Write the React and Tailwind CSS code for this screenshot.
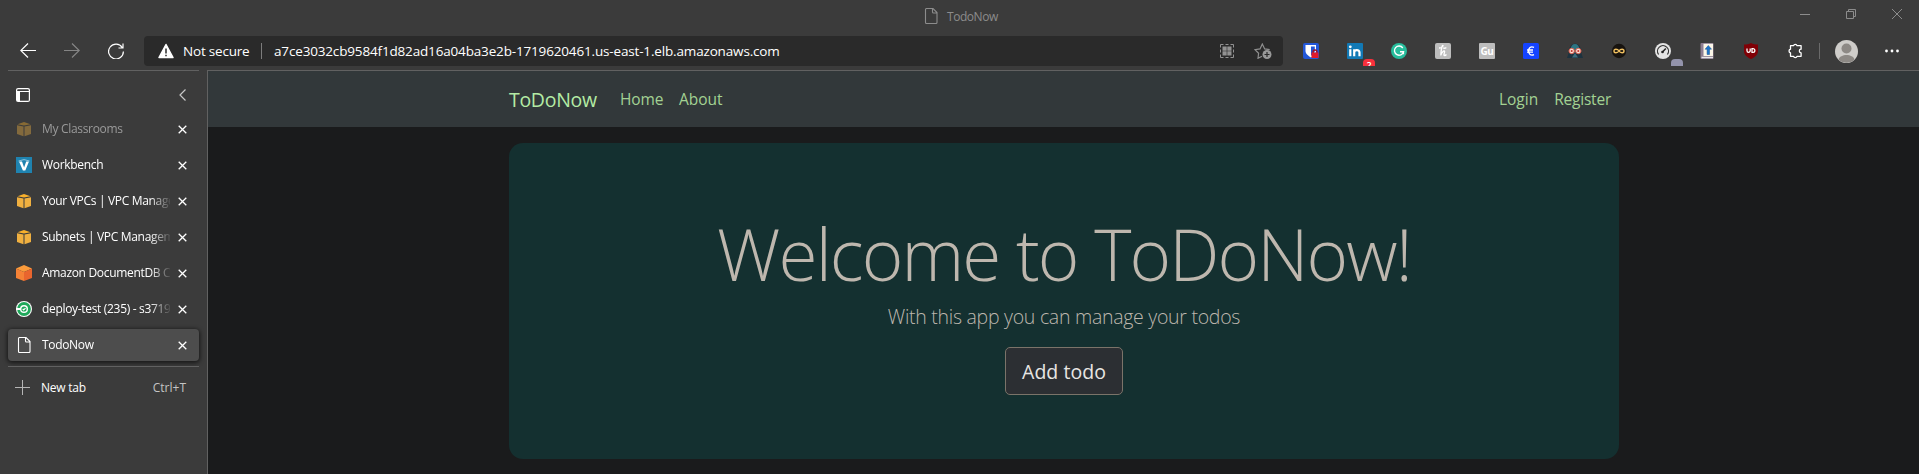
import React from "react";

const Svg = ({ w = 16, h = 16, className = "", children }) => (
  <svg width={w} height={h} viewBox={`0 0 ${w} ${h}`} fill="none" className={`block shrink-0 ${className}`}>
    {children}
  </svg>
);

const PageIcon = () => (
  <Svg>
    <path d="M3.500.500h6.500l4 4v10a1 1 0 0 1-1 1h-9.500a1 1 0 0 1-1-1v-13a1 1 0 0 1 1-1z M9.500.500v3.500a1 1 0 0 0 1 1h3.500" stroke="currentColor" strokeWidth="1.100" />
  </Svg>
);

const CubeIcon = () => (
  <Svg>
    <path d="M1.500 3.200 8 1l6.500 2.200L8 4.600z" fill="#f8b02c" />
    <path d="M1 4.200l6.500 1.200v9.900L1 12.900z M15 4.200 8.500 5.400v9.900l6.500-2.400z" fill="#f0b040" />
  </Svg>
);

const OrangeCube = () => (
  <Svg>
    <path d="M8 0l8 3.500L8 7 0 3.500z" fill="#fb9b3b" />
    <path d="M0 3.500 8 7v9l-8-3z" fill="#f58236" />
    <path d="M16 3.500 8 7v9l8-3z" fill="#e9652e" />
  </Svg>
);

const WorkbenchIcon = () => (
  <Svg>
    <path d="M0 0h16v16H0z" fill="#1f83b0" />
    <path d="M3 4.500h3l2.100 6 2.100-6h2.800L9.300 13.500H6.900z" fill="#fff" />
    <path d="M2.500 4Q8 1.200 13.500 4" stroke="#8cc4dc" />
  </Svg>
);

const CircleCi = () => (
  <Svg>
    <circle cx="8" cy="8" r="8" fill="#fff" />
    <circle cx="8" cy="8" r="6.900" fill="#1fa85a" />
    <circle cx="8" cy="8" r="4" fill="#fff" />
    <path d="M0 7h5v2H0z" fill="#fff" />
    <circle cx="8" cy="8" r="2.600" fill="#1fa85a" />
    <path d="M6.700 8l1 1L9.500 7.200" stroke="#fff" strokeWidth="1.200" />
  </Svg>
);

const tabs = [
  { label: "My Classrooms", icon: <CubeIcon />, dim: true },
  { label: "Workbench", icon: <WorkbenchIcon /> },
  { label: "Your VPCs | VPC Manage", icon: <CubeIcon /> },
  { label: "Subnets | VPC Managem", icon: <CubeIcon /> },
  { label: "Amazon DocumentDB C", icon: <OrangeCube /> },
  { label: "deploy-test (235) - s3719", icon: <CircleCi /> },
  { label: "TodoNow", icon: <PageIcon />, active: true },
];

function Tab({ label, icon, dim, active }) {
  return (
    <div className={`flex h-8 shrink-0 items-center rounded pl-2 pr-3 text-white ${active ? "bg-[#4d4d4d] shadow-[0_1px_4px_1px_rgba(0,0,0,0.6)]" : ""}`}>
      <span className={dim ? "opacity-40" : ""}>{icon}</span>
      <span className={`ml-2.5 w-[128px] overflow-hidden whitespace-nowrap text-[12px] leading-5 tracking-[-0.32px] [mask-image:linear-gradient(to_right,#000_108px,transparent_130px)] ${dim ? "text-[#9a9a9a]" : "text-white"}`}>
        {label}
      </span>
      <Svg w={9} h={9} className="ml-2">
        <path d="M.7.7l7.600 7.600M8.300.7.7 8.300" stroke="#fff" strokeWidth="1.300" />
      </Svg>
    </div>
  );
}

const extensions = [
  <Svg>
    <rect width="16" height="16" rx="2" fill="#2257d8" />
    <path d="M2.500 2h10.500v6c0 3-2.500 5-5 6.500C5.500 13 2.500 11 2.500 8z" fill="#fff" />
    <path d="M8 3.500h3.800V8c0 2-1.800 3.600-3.800 4.800z" fill="#2257d8" />
    <path d="M10 10V9a2 2 0 0 1 4 0v1" stroke="#a01020" strokeWidth="1.300" />
    <rect x="8.500" y="9.500" width="7" height="5.500" fill="#e01b2c" />
  </Svg>,
  <div className="relative">
    <Svg>
      <rect width="16" height="16" rx="1" fill="#1279b5" />
      <rect x="2.200" y="6.200" width="2.200" height="7" fill="#fff" />
      <circle cx="3.300" cy="3.800" r="1.400" fill="#fff" />
      <path d="M7.200 13.200v-7M7.200 9.500c0-3 5.300-3.200 5.300 0v3.700" stroke="#fff" strokeWidth="2.200" />
    </Svg>
    <div className="absolute left-4 top-4 h-[7px] w-3 overflow-hidden rounded-t-sm bg-[#f9303c] text-center text-[9px] font-semibold leading-[11px] text-white">2</div>
  </div>,
  <Svg>
    <circle cx="8" cy="8" r="8" fill="#27bd9c" />
    <path d="M11.800 5A4.600 4.600 0 1 0 12.500 8.800H9M12.400 8.800v2.500" stroke="#fff" strokeWidth="1.400" />
  </Svg>,
  <Svg>
    <rect width="16" height="16" rx="2" fill="#bdbdbd" />
    <path d="M4 5c2 0 4-1.200 4-2.500C7 2 6 7 5.800 12.500 6.300 9.500 9.500 6.500 9.600 8.500 9.600 10 8.200 12.500 9.500 12.500c1 0 1.500-.5 2-1M8 5c1.500.5 2.500.3 3.300-.5" stroke="#fff" strokeWidth="1.300" />
  </Svg>,
  <div className="flex h-4 w-4 items-center justify-center rounded-[1px] bg-[#bdbdbd] text-[10px] font-bold leading-none tracking-[-0.3px] text-white">Gu</div>,
  <Svg>
    <rect width="16" height="16" rx="1.500" fill="#1443ff" />
    <path d="M11 4.400C7.500 3 5.600 5 5.600 8s2 5 5.400 3.600M4 7h6M4 9.100h6" stroke="#fff" strokeWidth="1.300" />
  </Svg>,
  <Svg>
    <path d="M2 9C2 4 4 .8 8 .8S14 4 14 9l2 6H0z" fill="#1d3340" />
    <path d="M3.500 6.500C3.800 3 5.500 1 8 1s4.200 2 4.500 5.500z" fill="#2d7583" />
    <path d="M5 14.500 8 10l3 4.500z" fill="#3d6d7c" />
    <circle cx="4.700" cy="8" r="2.700" fill="#fbe3da" stroke="#d8604f" strokeWidth="1" />
    <circle cx="11.300" cy="8" r="2.700" fill="#fbe3da" stroke="#d8604f" strokeWidth="1" />
    <circle cx="4.700" cy="8" r="1.100" fill="#c8372f" />
    <circle cx="11.300" cy="8" r="1.100" fill="#c8372f" />
  </Svg>,
  <Svg>
    <circle cx="8" cy="8" r="7.200" fill="#17130f" />
    <path d="M8 8C6.500 5.600 3 5.600 3 8s3.500 2.400 5 0 5-2.400 5 0-3.500 2.400-5 0z" stroke="#f0c060" strokeWidth="1.400" />
  </Svg>,
  <div className="relative">
    <Svg>
      <circle cx="8" cy="8" r="8" fill="#e4e4e4" />
      <path d="M3.600 11.500A5.500 5.500 0 1 1 12.400 11.500" stroke="#333" strokeWidth="1.200" />
      <path d="M7.500 9 10.800 5.500" stroke="#222" strokeWidth="1.500" />
      <circle cx="7.500" cy="9" r="1.300" fill="#222" />
    </Svg>
    <div className="absolute left-4 top-4 h-[7px] w-3 rounded-t-sm bg-[#9393ab]" />
  </div>,
  <Svg>
    <rect x="1.500" y="0" width="13" height="16" rx="1" fill="#8d7e92" />
    <rect x="4.500" y=".8" width="9.500" height="12.200" fill="#fbf6e8" />
    <rect x="2.500" y="13.800" width="11.500" height="1.400" fill="#e8e8e8" />
    <path d="M9.300 2.500l3.200 3.700h-2v5.300H8.100V6.200h-2z" fill="#1c74cc" stroke="#174f88" strokeWidth=".5" />
  </Svg>,
  <Svg>
    <path d="M8 0c2 1.200 4.500 1.600 7 1.600V8c0 4-3.500 6.500-7 8-3.500-1.500-7-4-7-8V1.600C3.500 1.600 6 1.200 8 0z" fill="#800006" />
    <path d="M4 5.500v2.200a1.600 1.600 0 0 0 3.200 0V5.500M9 5.600v3.700h1a1.800 1.800 0 0 0 0-3.700z" stroke="#fff" strokeWidth="1.300" />
  </Svg>,
  <Svg>
    <path d="M4 2.700h2.500a1.900 1.900 0 0 1 3.600 0h4v3.500a1.800 1.800 0 0 0 0 3.600v3.500h-4a1.900 1.900 0 0 1-3.600 0H3.500V9.900a1.900 1.900 0 0 1 0-3.700V2.700z" stroke="#fff" strokeWidth="1.300" strokeLinejoin="round" />
  </Svg>,
];

function TitleBar() {
  return (
    <div className="flex h-9 items-start text-[#8c8c8c]">
      <div className="ml-[923px] mt-2 flex h-4 items-center">
        <PageIcon />
        <span className="ml-2 mt-px whitespace-nowrap text-[12px] leading-4 tracking-[-0.45px]">TodoNow</span>
      </div>
      <div className="ml-auto mr-[17px] mt-[9px] flex gap-9">
        <Svg w={10} h={10}><path d="M0 5.500h10" stroke="currentColor" /></Svg>
        <Svg w={10} h={10}><path d="M.5 2.500h7v7h-7z M2.500 2.500v-2h7v7h-2" stroke="currentColor" /></Svg>
        <Svg w={10} h={10}><path d="M0 0l10 10M10 0 0 10" stroke="currentColor" /></Svg>
      </div>
    </div>
  );
}

function Toolbar() {
  return (
    <div className="flex h-[30px] items-center">
      <div className="flex w-36 items-center gap-7 pl-5">
        <Svg><path d="M16 7.500H1M8 .500 .8 7.500 8 14.500" stroke="#fff" strokeWidth="1.200" /></Svg>
        <Svg><path d="M0 7.500h15M8 .500l7.200 7L8 14.500" stroke="#858585" strokeWidth="1.200" /></Svg>
        <Svg><path d="M14.200 4.500A7.400 7.400 0 1 0 15.400 8.500M15 .5v4.500h-4.500" stroke="#fff" strokeWidth="1.200" /></Svg>
      </div>
      <div className="flex h-[30px] w-[1139px] items-center rounded bg-[#2a2a2a] pl-3.5 pr-[11px] text-[13.500px] leading-5 text-white">
        <Svg>
          <path d="M8 1.500 15 14.500H1z" fill="#fff" stroke="#fff" strokeWidth="1.500" strokeLinejoin="round" />
          <path d="M8 5.500v5M8 11.700v1.600" stroke="#2a2a2a" strokeWidth="1.500" />
        </Svg>
        <span className="ml-[9px] w-[78px] whitespace-nowrap tracking-[-0.2px]">Not secure</span>
        <span className="h-4 w-px bg-[#7c7c7c]" />
        <span className="ml-3 whitespace-nowrap tracking-[-0.16px]">a7ce3032cb9584f1d82ad16a04ba3e2b-1719620461.us-east-1.elb.amazonaws.com</span>
        <div className="ml-auto flex items-center gap-[19px]">
          <Svg>
            <path d="M1.500 4.500v-3h3M6.500 1.500h3M11.500 1.500h3v3M14.500 6.500v3M14.500 11.500v3h-3M9.500 14.500h-3M4.500 14.500h-3v-3M1.500 9.500v-3" stroke="#929292" />
            <path d="M3.500 3.500h4.200v4.200H3.500z M8.300 3.500h4.200v4.200H8.300z M3.500 8.300h4.200v4.200H3.500z M8.300 8.300h4.200v4.200H8.300z" fill="#929292" />
          </Svg>
          <Svg w={18}>
            <path d="M8 13.200 4 15.300l.6-5L1 6.700l5-.8L8.300 1l2.400 4.900 5 .8" stroke="#8f8f8f" strokeWidth="1.200" />
            <circle cx="13" cy="11.500" r="4.500" fill="#999" />
            <path d="M13 9v5M10.500 11.500h5" stroke="#2a2a2a" strokeWidth="1.200" />
          </Svg>
        </div>
      </div>
      <div className="ml-5 flex items-center gap-7">
        {extensions.map((e, i) => <React.Fragment key={i}>{e}</React.Fragment>)}
      </div>
      <span className="ml-4 h-4 w-px bg-[#6a6a6a]" />
      <Svg w={23} h={23} className="ml-[15px]">
        <circle cx="11.500" cy="11.500" r="11.500" fill="#cfcdca" />
        <circle cx="11.500" cy="8.500" r="5" fill="#8d8985" />
        <path d="M3.500 19.500c1.500-6 14.500-6 16 0a11.500 11.500 0 0 1-16 0z" fill="#8d8985" />
      </Svg>
      <Svg w={14} h={4} className="ml-[27px]">
        <circle cx="1.500" cy="2" r="1.400" fill="#fff" /><circle cx="7" cy="2" r="1.400" fill="#fff" /><circle cx="12.500" cy="2" r="1.400" fill="#fff" />
      </Svg>
    </div>
  );
}

function Sidebar() {
  return (
    <aside className="flex w-[207px] shrink-0 flex-col pl-2 pr-2">
      <div className="h-px w-[191px] bg-[#616161]" />
      <div className="flex h-12 items-center justify-between pb-0 pl-2 pr-[13px]">
        <Svg w={14} h={14}>
          <rect x=".6" y=".6" width="12.800" height="12.800" rx="1.500" stroke="#fff" strokeWidth="1.200" />
          <path d="M1 3.500h12" stroke="#fff" />
          <path d="M1 3.500h3V13H1z" fill="#fff" />
        </Svg>
        <Svg w={7} h={12}><path d="M6.500.5 1 6l5.500 5.500" stroke="#c8c8c8" strokeWidth="1.200" /></Svg>
      </div>
      <div className="-mt-1.5 flex flex-col gap-1">
        {tabs.map((t) => <Tab key={t.label} {...t} />)}
      </div>
      <div className="mt-[5px] h-px w-[191px] bg-[#616161]" />
      <div className="mt-1 flex h-8 items-center pl-[7px] pr-[13px] text-[12px] leading-5">
        <Svg w={15} h={15}><path d="M7.500 0v15M0 7.500h15" stroke="#b5b5b5" /></Svg>
        <span className="ml-[11px] mt-0.5 tracking-[-0.25px] text-white">New tab</span>
        <span className="ml-auto mt-0.5 tracking-[0px] text-[#c4c4c4]">Ctrl+T</span>
      </div>
    </aside>
  );
}

function WebPage() {
  return (
    <main className="flex flex-1 flex-col border-l border-t border-[#616161] bg-[#1a1b1c]">
      <nav className="h-14 bg-[#32383a]">
        <div className="ml-[301px] flex h-14 w-[1110px] items-center pt-0.5 text-[15.500px] text-[#a3d293]">
          <span className="w-[111px] text-[19.500px] tracking-[-0.3px] text-[#b4eba4]">ToDoNow</span>
          <span className="w-[59px] tracking-[-0.15px]">Home</span>
          <span className="tracking-[-0.05px]">About</span>
          <span className="ml-auto mr-4 tracking-[0px]">Login</span>
          <span className="mr-2 tracking-[-0.22px]">Register</span>
        </div>
      </nav>
      <section className="ml-[301px] mt-4 flex h-[316px] w-[1110px] flex-col items-center rounded-[14px] bg-[#143030] pt-[68px]">
        <h1 className="whitespace-nowrap text-[71px] font-light leading-[86px] tracking-[-1.880px] text-[#beb7ae]">Welcome to ToDoNow!</h1>
        <p className="mt-[5px] whitespace-nowrap text-[19.500px] font-light leading-[30px] tracking-[-0.28px] text-[#beb7ae]">With this app you can manage your todos</p>
        <button className="mt-[15px] h-12 w-[118px] whitespace-nowrap rounded-[5px] border border-[#7b7369] bg-[#2c2f33] pt-px text-[19.500px] leading-[30px] tracking-[0.05px] text-[#e8e6e3]">Add todo</button>
      </section>
    </main>
  );
}

export default function App() {
  return (
    <div className="flex h-[474px] w-[1919px] flex-col overflow-hidden bg-[#3b3b3b] font-['Open_Sans','Noto_Sans',sans-serif]">
      <TitleBar />
      <Toolbar />
      <div className="mt-1 flex flex-1">
        <Sidebar />
        <WebPage />
      </div>
    </div>
  );
}
